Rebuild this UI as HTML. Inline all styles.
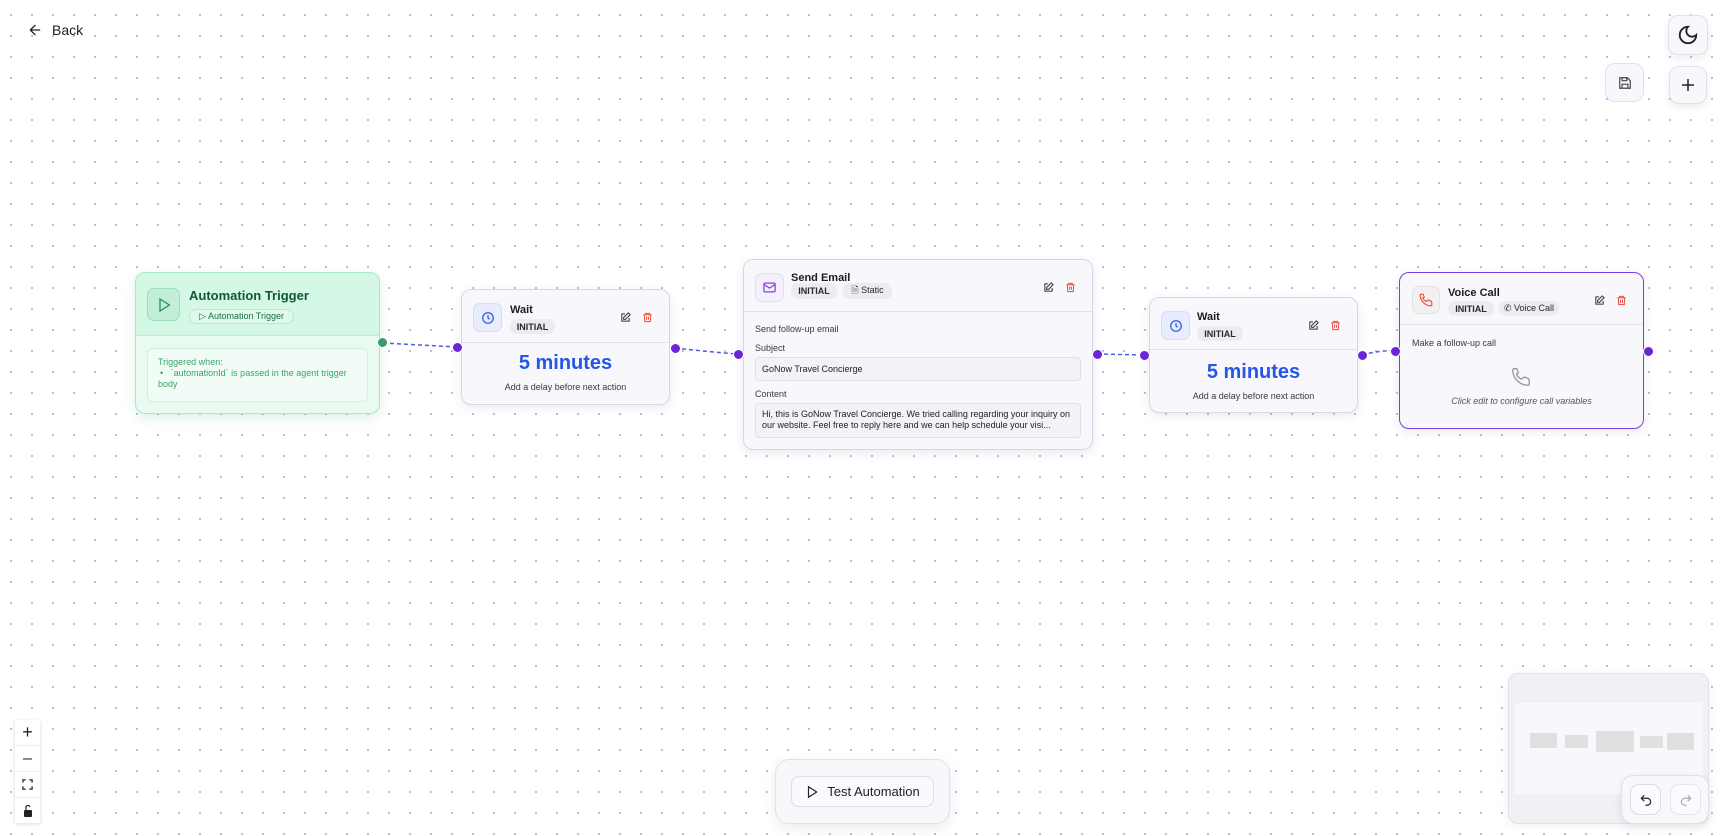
<!DOCTYPE html>
<html><head><meta charset="utf-8"><style>
*{box-sizing:border-box;margin:0;padding:0}
body{width:1720px;height:836px;overflow:hidden;position:relative;font-family:"Liberation Sans",sans-serif;color:#1d1b26;
background-color:#fff;background-image:radial-gradient(circle,#9c97f0 0.75px,transparent 1.05px);background-size:21px 21px;background-position:0.5px 4.5px}
.abs{position:absolute}
.node{position:absolute;background:#f8f7fc;border:1.5px solid #d9d6e4;border-radius:10px;box-shadow:0 3px 10px rgba(60,50,100,.1)}
.hdr{position:absolute;left:0;right:0;top:0;border-bottom:1px solid #e4e2ec}
.ibox{position:absolute;border:1px solid #e1dff0;border-radius:7px;background:#f1f0fb;display:flex;align-items:center;justify-content:center}
.title{position:absolute;font-weight:bold;font-size:11px}
.badge{position:absolute;height:15px;border-radius:7px;background:#ecebf1;font-size:9px;font-weight:bold;display:flex;align-items:center;justify-content:center;color:#2a2833}
.handle{position:absolute;width:11px;height:11px;border-radius:50%;background:#6b25d8;border:1px solid #fff}
.btn{position:absolute;background:#f8f7fc;border:1px solid #e2e0ec;border-radius:10px;display:flex;align-items:center;justify-content:center;box-shadow:0 3px 8px rgba(0,0,0,.08)}
.sm{font-size:9px;color:#3a3842}
</style></head><body>
<svg class="abs" style="left:0;top:0" width="1720" height="836">
<g stroke="#4f5de6" stroke-width="1.5" stroke-dasharray="4 3" fill="none">
<path d="M383 343 Q420 345 457 347"/>
<path d="M675 348 Q710 352 738 354"/>
<path d="M1097 354 L1144 355"/>
<path d="M1362 355 Q1380 350 1395 351"/>
</g></svg>

<div class="abs" style="left:27px;top:22px;display:flex;align-items:center;font-size:14px">
<svg width="16" height="16" viewBox="0 0 24 24" fill="none" stroke="#222" stroke-width="2" stroke-linecap="round" stroke-linejoin="round"><path d="M19 12H5M12 19l-7-7 7-7"/></svg>
<span style="margin-left:9px">Back</span></div>

<div class="btn" style="left:1668px;top:15px;width:40px;height:40px"><svg width="22" height="22" viewBox="0 0 24 24" fill="none" stroke="#222" stroke-width="2"><path d="M12 3a6 6 0 0 0 9 9 9 9 0 1 1-9-9Z"/></svg></div>
<div class="btn" style="left:1669px;top:66px;width:38px;height:38px"><svg width="18" height="18" viewBox="0 0 24 24" fill="none" stroke="#222" stroke-width="2"><path d="M12 4v16M4 12h16"/></svg></div>
<div class="btn" style="left:1605px;top:63px;width:39px;height:39px;box-shadow:none"><svg width="14" height="14" viewBox="0 0 24 24" fill="none" stroke="#444" stroke-width="2"><path d="M5 3h11l5 5v13H3V3zM7 3v5h8V3M7 21v-7h10v7"/></svg></div>

<!-- Trigger -->
<div class="abs" style="left:135px;top:272px;width:245px;height:142px;border:1.5px solid #a5ecc4;border-radius:10px;background:#e9fbf1;box-shadow:0 4px 12px rgba(40,160,100,.15);overflow:hidden">
<div style="position:absolute;left:0;right:0;top:0;height:63px;background:#d5f7e5;border-bottom:1px solid #bdeed2"></div>
<div style="position:absolute;left:11px;top:15px;width:33px;height:33px;border-radius:7px;background:#c0eed6;border:1px solid #9ddfba;display:flex;align-items:center;justify-content:center"><svg width="16" height="16" viewBox="0 0 24 24" fill="none" stroke="#2f8f5c" stroke-width="2"><path d="M6 3l14 9-14 9z"/></svg></div>
<div style="position:absolute;left:53px;top:15px;font-size:13px;font-weight:bold;color:#0d5a34">Automation Trigger</div>
<div style="position:absolute;left:53px;top:36px;width:105px;height:15px;border-radius:8px;border:1px solid #b3ecc9;background:#dff9ea;font-size:9px;color:#1f6f45;display:flex;align-items:center;justify-content:center">▷ Automation Trigger</div>
<div style="position:absolute;left:11px;top:75px;width:221px;height:54px;border-radius:6px;background:#f1fcf6;border:1px solid #cdf1dc;padding:8px 10px;font-size:9px;color:#3aa36a;line-height:11px">Triggered when:<br><span style="margin-left:2px">•&nbsp;&nbsp;&nbsp;`automationId` is passed in the agent trigger</span><br>body</div>
</div>
<div class="handle" style="left:377px;top:337px;background:#3a9a6c"></div>

<!-- Wait 1 -->
<div class="node" style="left:461px;top:289px;width:209px;height:116px">
<div class="hdr" style="height:53px"></div>
<div class="ibox" style="left:11px;top:13px;width:29px;height:29px;background:#e8ecfe;border-color:#d3dbfa"><svg width="14" height="14" viewBox="0 0 24 24" fill="none" stroke="#2d5de0" stroke-width="2.2"><circle cx="12" cy="12" r="9"/><path d="M12 7v5l3 2"/></svg></div>
<div class="title" style="left:48px;top:14px">Wait</div>
<div class="badge" style="left:48px;top:29px;width:45px">INITIAL</div>
<svg class="abs" style="left:158px;top:22px" width="11" height="11" viewBox="0 0 24 24" fill="none" stroke="#333" stroke-width="2.2"><path d="M11 4H4v16h16v-7M18 2l4 4-10 10H8v-4z"/></svg>
<svg class="abs" style="left:180px;top:22px" width="11" height="11" viewBox="0 0 24 24" fill="none" stroke="#ee4a3c" stroke-width="2.2"><path d="M3 6h18M8 6V3h8v3M5 6l1 15h12l1-15M10 10v7M14 10v7"/></svg>
<div class="abs" style="left:0;right:0;top:62px;text-align:center;font-size:20px;font-weight:bold;color:#2656e6">5 minutes</div>
<div class="abs sm" style="left:0;right:0;top:92px;text-align:center">Add a delay before next action</div>
</div>
<div class="handle" style="left:452px;top:342px"></div>
<div class="handle" style="left:670px;top:343px"></div>

<!-- Email -->
<div class="node" style="left:743px;top:259px;width:350px;height:191px">
<div class="hdr" style="height:52px"></div>
<div class="ibox" style="left:11px;top:13px;width:29px;height:29px"><svg width="15" height="15" viewBox="0 0 24 24" fill="none" stroke="#8b3fe0" stroke-width="2"><rect x="3" y="5" width="18" height="14" rx="2"/><path d="M3 7l9 6 9-6"/></svg></div>
<div class="title" style="left:47px;top:12px">Send Email</div>
<div class="badge" style="left:47px;top:23px;width:46px;height:16px">INITIAL</div>
<div class="badge" style="left:99px;top:23px;width:49px;height:16px;font-weight:normal">🗎&nbsp;Static</div>
<svg class="abs" style="left:299px;top:22px" width="11" height="11" viewBox="0 0 24 24" fill="none" stroke="#333" stroke-width="2.2"><path d="M11 4H4v16h16v-7M18 2l4 4-10 10H8v-4z"/></svg>
<svg class="abs" style="left:321px;top:22px" width="11" height="11" viewBox="0 0 24 24" fill="none" stroke="#ee4a3c" stroke-width="2.2"><path d="M3 6h18M8 6V3h8v3M5 6l1 15h12l1-15M10 10v7M14 10v7"/></svg>
<div class="abs sm" style="left:11px;top:64px">Send follow-up email</div>
<div class="abs sm" style="left:11px;top:83px">Subject</div>
<div class="abs sm" style="left:11px;top:97px;width:326px;height:24px;border:1px solid #e1dfe8;border-radius:4px;background:#f3f2f7;padding:6px 6px;color:#222">GoNow Travel Concierge</div>
<div class="abs sm" style="left:11px;top:129px">Content</div>
<div class="abs sm" style="left:11px;top:143px;width:326px;height:35px;border:1px solid #e1dfe8;border-radius:4px;background:#f3f2f7;padding:5px 6px;color:#222;line-height:11px">Hi, this is GoNow Travel Concierge. We tried calling regarding your inquiry on our website. Feel free to reply here and we can help schedule your visi...</div>
</div>
<div class="handle" style="left:733px;top:349px"></div>
<div class="handle" style="left:1092px;top:349px"></div>

<!-- Wait 2 -->
<div class="node" style="left:1149px;top:297px;width:209px;height:116px">
<div class="hdr" style="height:52px"></div>
<div class="ibox" style="left:11px;top:13px;width:29px;height:29px;background:#e8ecfe;border-color:#d3dbfa"><svg width="14" height="14" viewBox="0 0 24 24" fill="none" stroke="#2d5de0" stroke-width="2.2"><circle cx="12" cy="12" r="9"/><path d="M12 7v5l3 2"/></svg></div>
<div class="title" style="left:47px;top:13px">Wait</div>
<div class="badge" style="left:47px;top:28px;width:46px">INITIAL</div>
<svg class="abs" style="left:158px;top:22px" width="11" height="11" viewBox="0 0 24 24" fill="none" stroke="#333" stroke-width="2.2"><path d="M11 4H4v16h16v-7M18 2l4 4-10 10H8v-4z"/></svg>
<svg class="abs" style="left:180px;top:22px" width="11" height="11" viewBox="0 0 24 24" fill="none" stroke="#ee4a3c" stroke-width="2.2"><path d="M3 6h18M8 6V3h8v3M5 6l1 15h12l1-15M10 10v7M14 10v7"/></svg>
<div class="abs" style="left:0;right:0;top:63px;text-align:center;font-size:20px;font-weight:bold;color:#2656e6">5 minutes</div>
<div class="abs sm" style="left:0;right:0;top:93px;text-align:center">Add a delay before next action</div>
</div>
<div class="handle" style="left:1139px;top:350px"></div>
<div class="handle" style="left:1357px;top:350px"></div>

<!-- Voice -->
<div class="node" style="left:1399px;top:272px;width:245px;height:157px;border:1.5px solid #7b3fe0">
<div class="hdr" style="height:52px"></div>
<div class="ibox" style="left:12px;top:13px;width:28px;height:28px;background:#f3f1f0;border-color:#e4e2e0"><svg width="14" height="14" viewBox="0 0 24 24" fill="none" stroke="#ef4a3a" stroke-width="2"><path d="M22 17v3a2 2 0 0 1-2 2A19 19 0 0 1 2 4a2 2 0 0 1 2-2h3l2 5-2.5 1.5a11 11 0 0 0 6 6L16 12l5 2z"/></svg></div>
<div class="title" style="left:48px;top:14px">Voice Call</div>
<div class="badge" style="left:48px;top:28px;width:46px">INITIAL</div>
<div class="badge" style="left:99px;top:28px;width:60px;font-weight:normal">✆ Voice Call</div>
<svg class="abs" style="left:194px;top:22px" width="11" height="11" viewBox="0 0 24 24" fill="none" stroke="#333" stroke-width="2.2"><path d="M11 4H4v16h16v-7M18 2l4 4-10 10H8v-4z"/></svg>
<svg class="abs" style="left:216px;top:22px" width="11" height="11" viewBox="0 0 24 24" fill="none" stroke="#ee4a3c" stroke-width="2.2"><path d="M3 6h18M8 6V3h8v3M5 6l1 15h12l1-15M10 10v7M14 10v7"/></svg>
<div class="abs sm" style="left:12px;top:65px">Make a follow-up call</div>
<svg class="abs" style="left:111px;top:94px" width="20" height="20" viewBox="0 0 24 24" fill="none" stroke="#999" stroke-width="1.6"><path d="M22 17v3a2 2 0 0 1-2 2A19 19 0 0 1 2 4a2 2 0 0 1 2-2h3l2 5-2.5 1.5a11 11 0 0 0 6 6L16 12l5 2z"/></svg>
<div class="abs" style="left:0;right:0;top:123px;text-align:center;font-size:9px;font-style:italic;color:#555">Click edit to configure call variables</div>
</div>
<div class="handle" style="left:1390px;top:346px"></div>
<div class="handle" style="left:1643px;top:346px"></div>

<!-- Zoom controls -->
<div class="abs" style="left:15px;top:720px;width:25px;height:103px;background:#fff;box-shadow:0 1px 4px rgba(0,0,0,.15)">
<div style="height:26px;border-bottom:1px solid #eee;display:flex;align-items:center;justify-content:center;font-size:18px">+</div>
<div style="height:26px;border-bottom:1px solid #eee;display:flex;align-items:center;justify-content:center;font-size:16px">–</div>
<div style="height:26px;border-bottom:1px solid #eee;display:flex;align-items:center;justify-content:center"><svg width="11" height="11" viewBox="0 0 12 12" fill="none" stroke="#222" stroke-width="1.4"><path d="M1 4V1h3M8 1h3v3M11 8v3H8M4 11H1V8"/></svg></div>
<div style="height:25px;display:flex;align-items:center;justify-content:center"><svg width="10" height="12" viewBox="0 0 10 12"><path d="M3 5V3a2 2 0 0 1 4-1" fill="none" stroke="#222" stroke-width="1.2"/><rect x="1" y="5" width="8" height="7" rx="1" fill="#222"/></svg></div>
</div>

<!-- Test automation -->
<div class="abs" style="left:775px;top:759px;width:175px;height:65px;border:1px solid #e2e0ec;border-radius:14px;background:#f8f7fc;box-shadow:0 4px 14px rgba(0,0,0,.08)"></div>
<div class="abs" style="left:791px;top:776px;width:143px;height:31px;border:1px solid #dedcea;border-radius:8px;background:#faf9fd;display:flex;align-items:center;justify-content:center;font-size:13px;color:#222">
<svg width="14" height="14" viewBox="0 0 24 24" fill="none" stroke="#222" stroke-width="2"><path d="M6 3l14 9-14 9z"/></svg><span style="margin-left:8px">Test Automation</span></div>

<!-- Minimap -->
<div class="abs" style="left:1508px;top:673px;width:201px;height:151px;border:1px solid #e2e0ea;border-radius:10px;background:#f1f0f4;box-shadow:0 2px 10px rgba(0,0,0,.06)"></div>
<div class="abs" style="left:1515px;top:703px;width:188px;height:91px;background:#f8f8fc"></div>
<div class="abs" style="left:1530px;top:733px;width:27px;height:15px;background:#e0e0e0"></div>
<div class="abs" style="left:1565px;top:735px;width:23px;height:13px;background:#e0e0e0"></div>
<div class="abs" style="left:1596px;top:731px;width:38px;height:21px;background:#e0e0e0"></div>
<div class="abs" style="left:1640px;top:736px;width:23px;height:12px;background:#e0e0e0"></div>
<div class="abs" style="left:1667px;top:733px;width:27px;height:17px;background:#e0e0e0"></div>
<div class="abs" style="left:1621px;top:775px;width:88px;height:49px;border:1px solid #e2e0ec;border-radius:12px;background:#f8f7fc;box-shadow:0 3px 10px rgba(0,0,0,.08)"></div>
<div class="abs" style="left:1630px;top:784px;width:31px;height:31px;border:1px solid #dcdae6;border-radius:9px;background:#fbfafe;display:flex;align-items:center;justify-content:center"><svg width="14" height="14" viewBox="0 0 24 24" fill="none" stroke="#222" stroke-width="2"><path d="M9 14L4 9l5-5M4 9h10a6 6 0 0 1 0 12h-3"/></svg></div>
<div class="abs" style="left:1670px;top:784px;width:31px;height:31px;border:1px solid #e6e4ee;border-radius:9px;background:#fbfafe;display:flex;align-items:center;justify-content:center"><svg width="14" height="14" viewBox="0 0 24 24" fill="none" stroke="#aaa" stroke-width="2"><path d="M15 14l5-5-5-5M20 9H10a6 6 0 0 0 0 12h3"/></svg></div>
</body></html>
